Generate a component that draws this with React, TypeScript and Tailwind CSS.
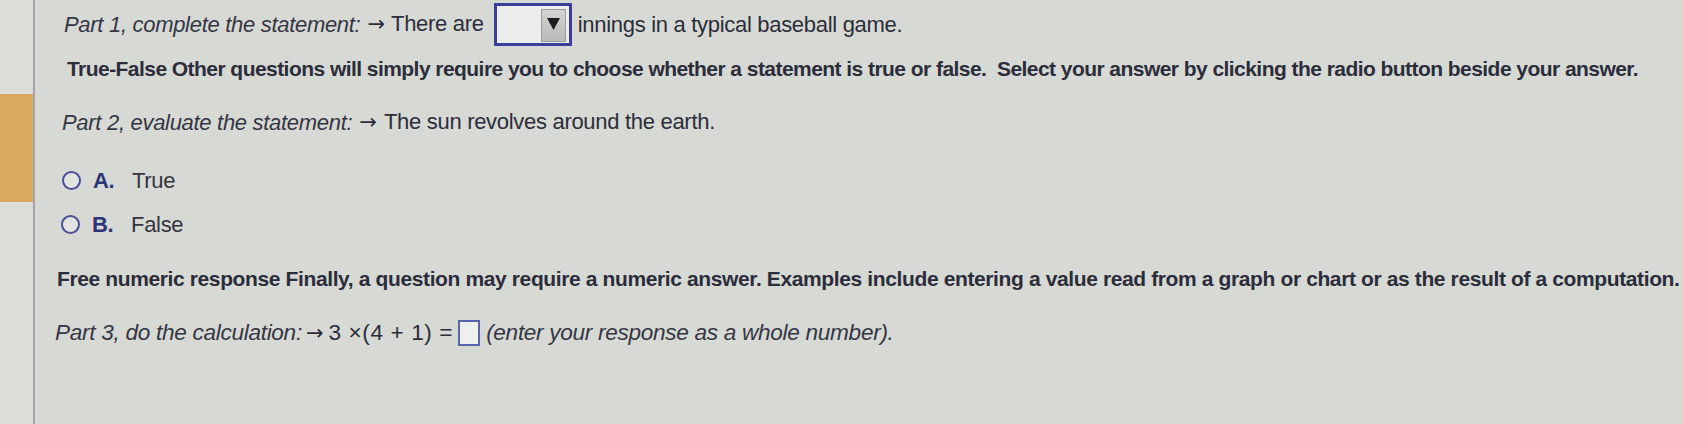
import React from "react";

const font = { fontFamily: '"Liberation Sans", Arial, sans-serif' };
const arrowFont = { fontFamily: '"DejaVu Sans", sans-serif' };

function Arrow() {
  return (
    <span className="text-[21px] tracking-normal" style={arrowFont}>
      →
    </span>
  );
}

function Radio({ letter, label, ml }: { letter: string; label: string; ml: string }) {
  return (
    <div className={`flex items-center h-[28px] ${ml}`}>
      <span className="inline-block w-[19px] h-[19px] rounded-full border-2 border-[#4a4f98] bg-[#e2e4e0]" />
      <span className="ml-[12px] w-[39px] font-bold text-[#2d3577]">{letter}</span>
      <span className="text-[#34353f]">{label}</span>
    </div>
  );
}

export default function App() {
  return (
    <div className="w-[1683px] h-[424px] flex bg-[#d7d9d4] overflow-hidden text-[22px] tracking-[-0.3px] text-[#2c2d3a]" style={font}>
      <div className="w-[33px] shrink-0 bg-[#dcdcd9] flex flex-col">
        <div className="h-[94px]" />
        <div className="h-[108px] bg-[#d9a95f]" />
      </div>
      <div className="w-[2px] shrink-0 bg-[#a3a3ad]" />
      <div className="flex-1 flex flex-col">
        <div className="mt-[1px] h-[46px] flex items-center ml-[29px] whitespace-nowrap">
          <span className="italic text-[#353644]">Part 1, complete the statement:</span>
          <span className="ml-[7px] flex items-baseline">
            <Arrow />
            <span className="ml-[6px]">There are</span>
          </span>
          <div className="ml-[10px] w-[78px] h-[43px] border-[3px] border-[#3b3f9b] bg-[#eceeeb] flex justify-end items-start p-[3px]">
            <div className="w-[25px] h-[33px] bg-gradient-to-b from-[#d4d5d2] to-[#b9bab7] border border-[#9c9d9a] flex justify-center pt-[8px]">
              <svg width="13" height="12" viewBox="0 0 13 12"><polygon points="0,0 13,0 6.5,12" fill="#1c1c22" /></svg>
            </div>
          </div>
          <span className="ml-[6px]">innings in a typical baseball game.</span>
        </div>
        <div className="mt-[8px] h-[28px] leading-[28px] ml-[32px] font-bold whitespace-nowrap text-[21px] tracking-[-0.55px]">
          True-False Other questions will simply require you to choose whether a statement is true or false.&nbsp; Select your answer by clicking the radio button beside your answer.
        </div>
        <div className="mt-[25px] h-[28px] flex items-center ml-[27px] whitespace-nowrap">
          <span className="italic text-[#353644]">Part 2, evaluate the statement:</span>
          <span className="ml-[7px] flex items-baseline">
            <Arrow />
            <span className="ml-[7px]">The sun revolves around the earth.</span>
          </span>
        </div>
        <div className="mt-[30px]">
          <Radio letter="A." label="True" ml="ml-[27px]" />
        </div>
        <div className="mt-[16px]">
          <Radio letter="B." label="False" ml="ml-[26px]" />
        </div>
        <div className="mt-[27px] h-[28px] leading-[28px] ml-[22px] font-bold whitespace-nowrap text-[21px] tracking-[-0.38px]">
          Free numeric response Finally, a question may require a numeric answer. Examples include entering a value read from a graph or chart or as the result of a computation.
        </div>
        <div className="mt-[26px] h-[28px] flex items-center ml-[20px] whitespace-nowrap text-[22.6px]">
          <span className="italic text-[#353644]">Part 3, do the calculation:</span>
          <span className="ml-[4px]">
            <Arrow />
          </span>
          <span className="ml-[5px] tracking-[0.6px]">3 ×(4 + 1) =</span>
          <span className="ml-[5px] inline-block w-[22px] h-[26px] border-2 border-[#5a64a8] bg-[#eef0ee]" />
          <span className="ml-[6px] italic text-[#353644]">(enter your response as a whole number).</span>
        </div>
      </div>
    </div>
  );
}
